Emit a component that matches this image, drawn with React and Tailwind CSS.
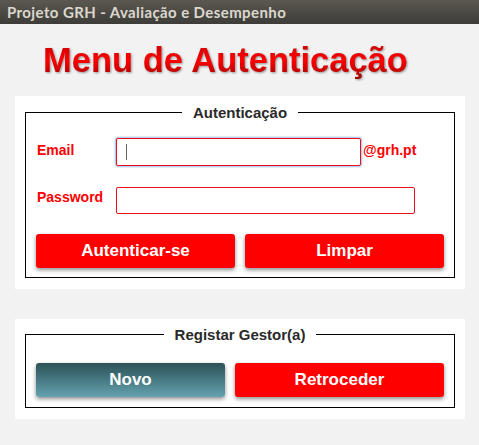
import React from 'react';

const btn = 'h-[34px] rounded-[3px] text-white font-bold text-[17px] shadow-[0_2px_4px_rgba(0,0,0,0.45)] flex items-center justify-center';

const Group = ({ title, children, className }) => (
    <div className={`relative border border-black ${className}`}>
        <div className="absolute left-0 right-0 -top-[9px] flex justify-center">
            <span className="bg-white px-[11px] text-[15px] leading-[18px] font-bold text-[#2a2a2a]">{title}</span>
        </div>
        {children}
    </div>
);

export default function App() {
    return (
        <div className="w-[479px] h-[445px] bg-[#f2f2f2] overflow-hidden" style={{ fontFamily: '"Liberation Sans", Arial, sans-serif' }}>
            {/* window title bar */}
            <div className="h-[24px] bg-gradient-to-b from-[#5c5851] to-[#3d3c38] flex items-center pl-[7px]">
                <span className="text-[#dcd8cf] text-[15px] tracking-[0.4px] font-bold leading-none" style={{ fontFamily: 'Lato, sans-serif' }}>
                    Projeto GRH - Avaliação e Desempenho
                </span>
            </div>

            <h1 className="mt-[16px] ml-[43px] text-[34.5px] leading-[40px] font-bold">
                <span className="bg-gradient-to-b from-[#c00000] via-[#ff0000] to-[#a00000] bg-clip-text text-transparent drop-shadow-[1px_1px_1px_rgba(0,0,0,0.4)]">
                    Menu de Autenticação
                </span>
            </h1>

            {/* authentication panel */}
            <div className="mt-[16px] ml-[15px] w-[450px] bg-white px-[10px] pt-[16px] pb-[11px]">
                <Group title="Autenticação" className="px-[10px] pt-[25px] pb-[9px]">
                    <div className="flex items-start h-[28px]">
                        <span className="w-[80px] pl-px pt-[2px] text-[14px] font-bold text-[#ff0000]">Email</span>
                        <div className="w-[245px] h-[28px] border border-[#e8101a] rounded-[2px] bg-white shadow-[0_0_2px_1px_rgba(110,160,215,0.7)] flex items-center pl-[9px]">
                            <span className="w-px h-[16px] bg-[#666]" />
                        </div>
                        <span className="ml-[2px] pt-[2px] text-[14px] font-bold text-[#ff0000]">@grh.pt</span>
                    </div>
                    <div className="flex items-start mt-[21px] h-[26px]">
                        <span className="w-[80px] pl-px pt-0 text-[14px] font-bold text-[#ff0000]">Password</span>
                        <div className="w-[299px] h-[27px] border border-[#e8101a] rounded-[2px] bg-white" />
                    </div>
                    <div className="flex gap-[10px] mt-[21px]">
                        <div className={`${btn} flex-1 bg-[#ff0000]`}>Autenticar-se</div>
                        <div className={`${btn} flex-1 bg-[#ff0000]`}>Limpar</div>
                    </div>
                </Group>
            </div>

            {/* register panel */}
            <div className="mt-[30px] ml-[15px] w-[450px] bg-white px-[10px] pt-[15px] pb-[11px]">
                <Group title="Registar Gestor(a)" className="px-[10px] pt-[28px] pb-[10px]">
                    <div className="flex gap-[10px]">
                        <div className={`${btn} w-[189px] bg-gradient-to-b from-[#2d5258] to-[#64a3b0]`}>Novo</div>
                        <div className={`${btn} flex-1 bg-[#ff0000]`}>Retroceder</div>
                    </div>
                </Group>
            </div>
        </div>
    );
}
